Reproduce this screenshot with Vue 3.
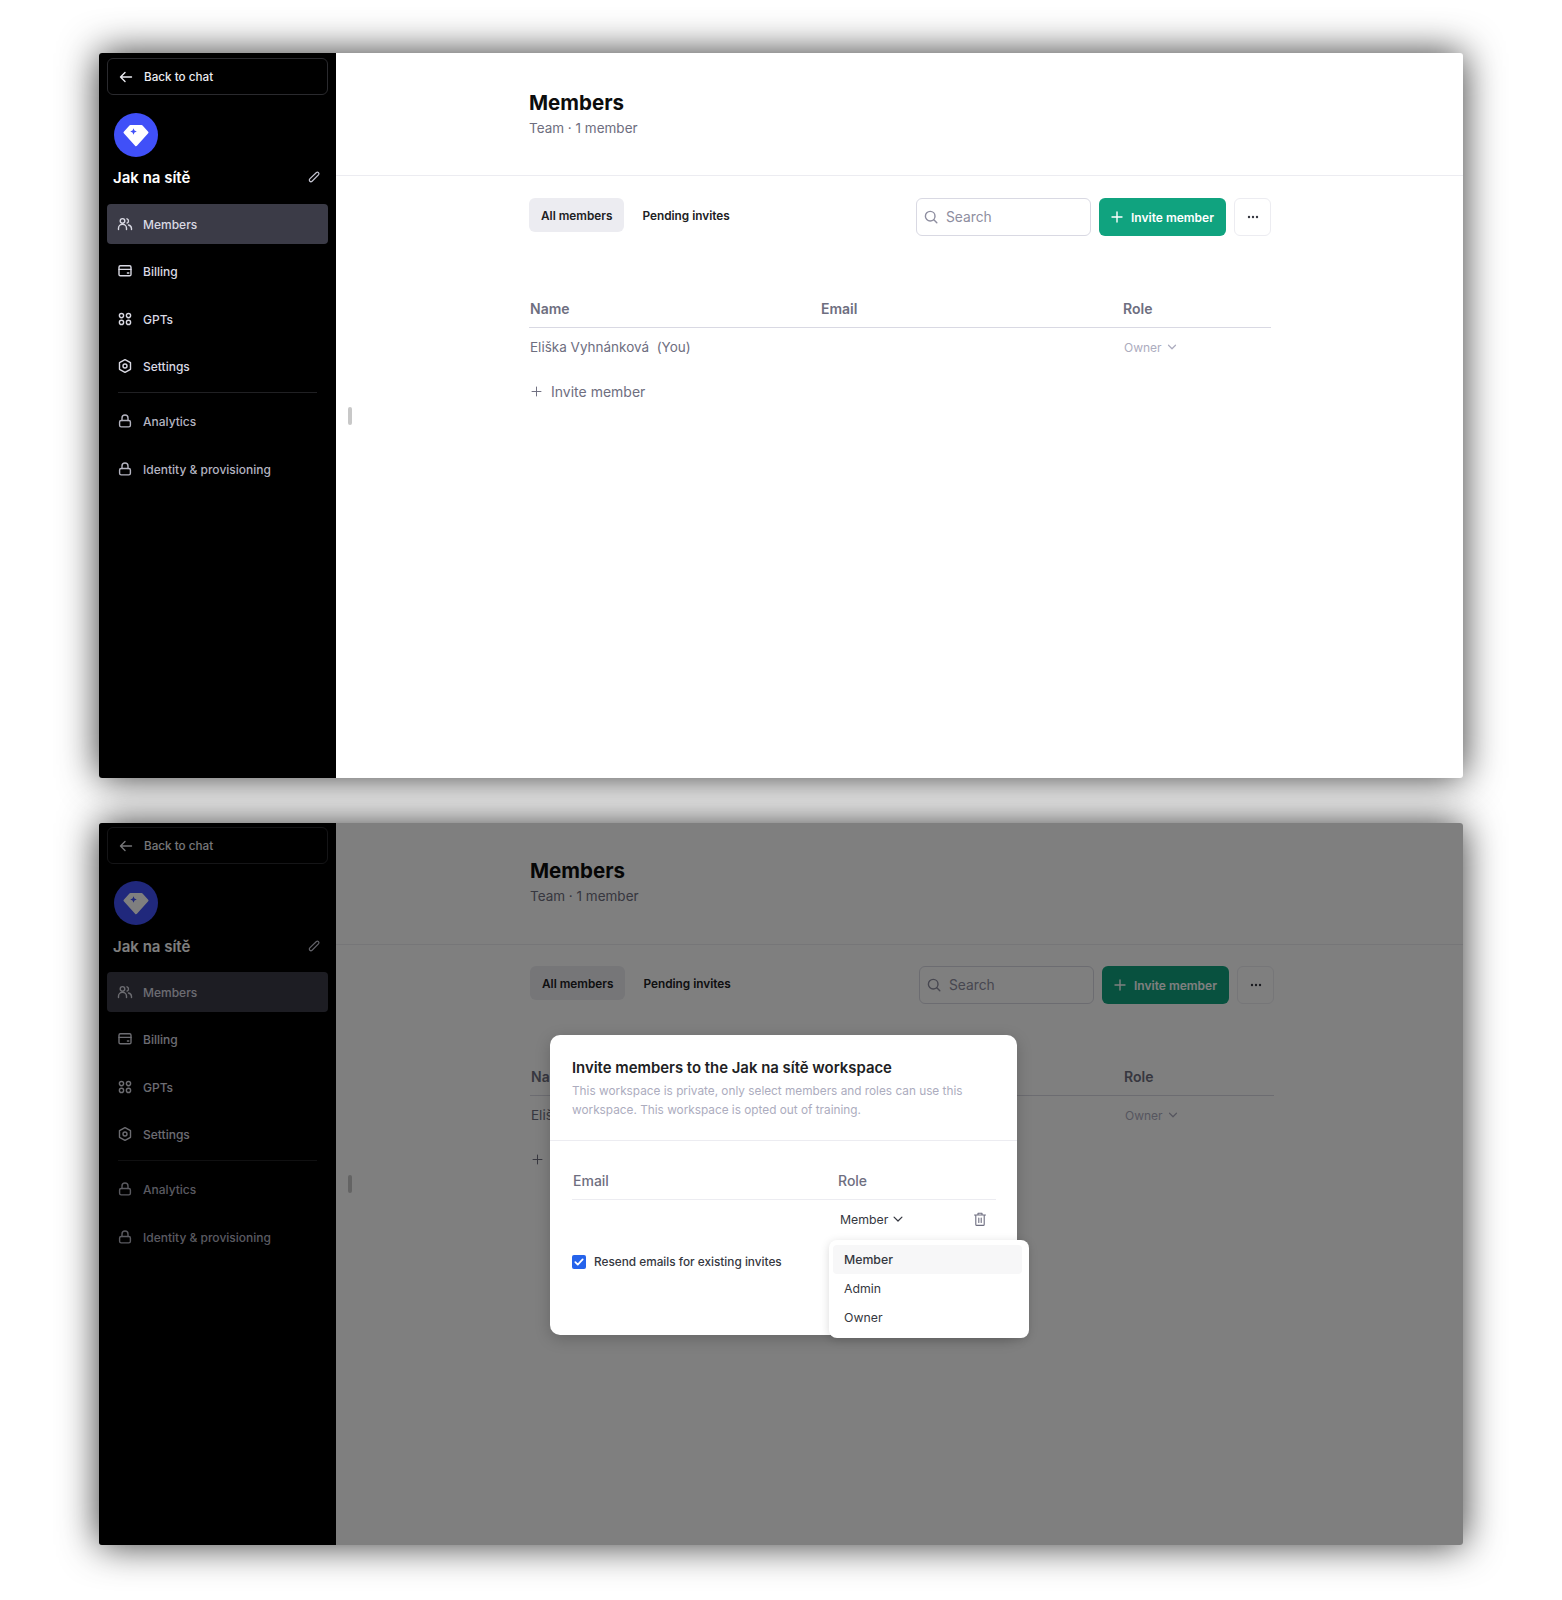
<template>
  <div class="page">
    <section v-for="win in windows" :key="win.id" :class="['window', { second: win.modal }]">
      <aside class="sidebar">
        <button class="back" type="button">
          <svg class="ico" viewBox="0 0 16 16"><path d="M13.5 8h-11M7 3.5 2.5 8 7 12.5" /></svg>
          <span>Back to chat</span>
        </button>
        <div class="avatar">
          <svg viewBox="0 0 24 24" width="30" height="30">
            <path class="gem" d="M7.5 5h9L21 10 12 20 3 10z" />
            <path class="spark" d="M10 6.6l.8 1.8 1.8.8-1.8.8-.8 1.8-.8-1.8-1.8-.8 1.8-.8z" />
          </svg>
        </div>
        <div class="team">
          <span>Jak na sítě</span>
          <svg class="ico pencil" viewBox="0 0 16 16">
            <path d="M10.8 2.8a1.8 1.8 0 0 1 2.5 2.5l-7.5 7.5a1.8 1.8 0 0 1-2.6-2.6z" />
          </svg>
        </div>
        <nav class="nav">
          <a v-for="item in navTop" :key="item.label" :class="['nav-row', { active: item.active }]">
            <svg class="ico" viewBox="0 0 16 16"><path v-for="d in item.paths" :key="d" :d="d" /></svg>
            <span>{{ item.label }}</span>
          </a>
          <div class="sep"></div>
          <a v-for="item in navLocked" :key="item" class="nav-row locked">
            <svg class="ico" viewBox="0 0 16 16">
              <path d="M5 7.5V5a3 3 0 0 1 6 0v2.5" />
              <rect x="2.6" y="7.5" width="10.8" height="6.4" rx="1.6" />
            </svg>
            <span>{{ item }}</span>
          </a>
        </nav>
      </aside>

      <main class="main">
        <span class="handle"></span>
        <header class="head">
          <h1>Members</h1>
          <p>Team · 1 member</p>
        </header>
        <div class="body">
          <div class="toolbar">
            <div class="tabs">
              <span class="tab on">All members</span>
              <span class="tab">Pending invites</span>
            </div>
            <div class="tools">
              <label class="search">
                <svg class="ico" viewBox="0 0 16 16"><circle cx="7.2" cy="7.2" r="4.8" /><path d="m10.8 10.8 3 3" /></svg>
                <span>Search</span>
              </label>
              <button class="invite" type="button">
                <svg class="ico" viewBox="0 0 16 16"><path d="M8 3v10M3 8h10" /></svg>
                Invite member
              </button>
              <button class="more" type="button">
                <svg viewBox="0 0 16 16" width="16" height="16"><circle cx="4" cy="8" r="1.2" /><circle cx="8" cy="8" r="1.2" /><circle cx="12" cy="8" r="1.2" /></svg>
              </button>
            </div>
          </div>
          <div class="table">
            <div class="thead"><span>Name</span><span>Email</span><span>Role</span></div>
            <div class="trow">
              <span>Eliška Vyhnánková&nbsp; (You)</span>
              <span></span>
              <span class="owner">
                Owner
                <svg class="ico" viewBox="0 0 16 16"><path d="m4 6 4 4 4-4" /></svg>
              </span>
            </div>
            <div class="add">
              <svg class="ico" viewBox="0 0 16 16"><path d="M8 2.5v11M2.5 8h11" /></svg>
              Invite member
            </div>
          </div>
        </div>
      </main>

      <template v-if="win.modal">
        <div class="overlay"></div>
        <div class="modal">
          <div class="modal-head">
            <h2>Invite members to the Jak na sítě workspace</h2>
            <p>This workspace is private, only select members and roles can use this workspace. This workspace is opted out of training.</p>
          </div>
          <div class="modal-body">
            <div class="m-head"><span>Email</span><span>Role</span></div>
            <div class="m-row">
              <span class="m-role">
                Member
                <svg class="ico" viewBox="0 0 16 16"><path d="m3.5 5.8 4.5 4.5 4.5-4.5" /></svg>
              </span>
              <svg class="ico trash" viewBox="0 0 16 16">
                <path d="M2.5 4h11M6 4V2.2h4V4M3.8 4v9.4a1 1 0 0 0 1 1h6.4a1 1 0 0 0 1-1V4M6.8 7v4.5M9.2 7v4.5" />
              </svg>
            </div>
            <div class="resend">
              <span class="check">
                <svg viewBox="0 0 16 16" width="14" height="14"><path d="m3.8 8.2 2.8 2.8 5.6-6" /></svg>
              </span>
              Resend emails for existing invites
            </div>
          </div>
        </div>
        <ul class="menu">
          <li v-for="(opt, i) in roles" :key="opt" :class="{ hover: i === 0 }">{{ opt }}</li>
        </ul>
      </template>
    </section>
  </div>
</template>

<script setup>
const windows = [
  { id: 1, modal: false },
  { id: 2, modal: true },
];

const navTop = [
  {
    label: "Members",
    active: true,
    paths: [
      "M1.5 13.5v-1.2a4 4 0 0 1 8 0v1.2",
      "M3.2 4.9a2.3 2.3 0 1 0 4.6 0 2.3 2.3 0 1 0-4.6 0",
      "M10 2.8a2.3 2.3 0 0 1 0 4.3",
      "M11.5 9a3.8 3.8 0 0 1 3 3.5v1",
    ],
  },
  {
    label: "Billing",
    paths: [
      "M3.4 2.8h9.2a1.4 1.4 0 0 1 1.4 1.4v7.2a1.4 1.4 0 0 1-1.4 1.4H3.4A1.4 1.4 0 0 1 2 11.4V4.2a1.4 1.4 0 0 1 1.4-1.4z",
      "M2 6.4h12",
      "M10.4 10h1.4",
    ],
  },
  {
    label: "GPTs",
    paths: [
      "M2.4 4.6a2.1 2.1 0 1 0 4.2 0 2.1 2.1 0 1 0-4.2 0",
      "M9.4 4.6a2.1 2.1 0 1 0 4.2 0 2.1 2.1 0 1 0-4.2 0",
      "M2.4 11.4a2.1 2.1 0 1 0 4.2 0 2.1 2.1 0 1 0-4.2 0",
      "M9.4 11.4a2.1 2.1 0 1 0 4.2 0 2.1 2.1 0 1 0-4.2 0",
    ],
  },
  {
    label: "Settings",
    paths: [
      "M8 1.6l5.5 3.1v6.6L8 14.4l-5.5-3.1V4.7z",
      "M6 8a2 2 0 1 0 4 0 2 2 0 1 0-4 0",
    ],
  },
];

const navLocked = ["Analytics", "Identity & provisioning"];
const roles = ["Member", "Admin", "Owner"];
</script>

<style>
html,
body {
  margin: 0;
  background: #fff;
}
</style>

<style scoped>
.page {
  height: 1600px;
  overflow: hidden;
  box-sizing: border-box;
  padding: 53px 99px 0;
  display: flex;
  flex-direction: column;
  gap: 45px;
  font-family: Inter, "Liberation Sans", sans-serif;
  color: #202123;
}

.window {
  position: relative;
  display: flex;
  height: 725px;
  background: #fff;
  border-radius: 3px;
  box-shadow: 0 0 38px rgba(0, 0, 0, 0.8);
}

.window.second {
  height: 722px;
}

.ico {
  width: 16px;
  height: 16px;
  flex: none;
  fill: none;
  stroke: currentColor;
  stroke-width: 1.4;
  stroke-linecap: round;
  stroke-linejoin: round;
}

.sidebar {
  width: 237px;
  flex: none;
  box-sizing: border-box;
  padding: 5px 8px;
  background: #000;
  border-radius: 3px 0 0 3px;
  color: #ececf1;
}

.second .sidebar {
  padding-top: 4px;
}

.back {
  display: flex;
  align-items: center;
  gap: 10px;
  width: 100%;
  height: 37px;
  box-sizing: border-box;
  padding: 0 10px;
  border: 1px solid #2a2a2e;
  border-radius: 6px;
  background: none;
  color: #ececf1;
  font: 500 11.7px Inter, sans-serif;
}

.avatar {
  width: 44px;
  height: 44px;
  margin: 18px 0 0 7px;
  border-radius: 50%;
  background: #4050f8;
  display: flex;
  align-items: center;
  justify-content: center;
}

.second .avatar {
  margin-top: 17px;
}

.gem {
  fill: #fff;
  stroke: #fff;
  stroke-width: 2;
  stroke-linejoin: round;
}

.spark {
  fill: #4050f8;
}

.team {
  display: flex;
  align-items: center;
  justify-content: space-between;
  height: 24px;
  margin: 8px 0 15px 6px;
  padding-right: 7px;
  font-size: 15px;
  font-weight: 600;
  color: #fff;
}

.second .team {
  margin: 9px 0 14px 6px;
}

.pencil {
  width: 14px;
  height: 14px;
  color: #c5c5d2;
}

.nav {
  display: flex;
  flex-direction: column;
  gap: 7.3px;
}

.nav-row {
  display: flex;
  align-items: center;
  gap: 10px;
  height: 40px;
  padding: 0 10px;
  border-radius: 4px;
  font-size: 12px;
  font-weight: 500;
  color: #d9d9e3;
}

.nav-row span {
  padding-top: 1px;
}

.nav-row.active {
  background: #3b3b47;
}

.sep {
  height: 1px;
  margin: -1px 11px 1px;
  background: #202023;
}

.nav-row.locked {
  color: #b4b4c0;
}

.main {
  position: relative;
  flex: 1;
  min-width: 0;
}

.handle {
  position: absolute;
  left: 12px;
  top: 354px;
  width: 4px;
  height: 18px;
  border-radius: 2px;
  background: #c8c8c8;
}

.second .handle {
  top: 352px;
}

.head {
  height: 123px;
  box-sizing: border-box;
  padding: 36px 0 0 193px;
  border-bottom: 1px solid #ececf1;
}

.second .head {
  height: 122px;
  padding: 34px 0 0 194px;
}

h1 {
  margin: 0;
  font-size: 20.5px;
  line-height: 28px;
  font-weight: 700;
  color: #0d0d0d;
}

.head p {
  margin: 1px 0 0;
  font-size: 13.5px;
  line-height: 20px;
  color: #6e6e80;
}

.body {
  width: 742px;
  margin-left: 193px;
  padding-top: 22px;
}

.second .body {
  width: 744px;
  margin-left: 194px;
  padding-top: 21px;
}

.toolbar {
  display: flex;
  justify-content: space-between;
  align-items: flex-start;
}

.tabs {
  display: flex;
  gap: 2px;
}

.tab {
  display: flex;
  align-items: center;
  height: 34px;
  padding: 1px 12px 0;
  box-sizing: border-box;
  border-radius: 6px;
  font-size: 11.8px;
  font-weight: 600;
}

.tab + .tab {
  padding-left: 16px;
}

.tab.on {
  background: #ececf1;
}

.tools {
  display: flex;
  gap: 8px;
}

.search {
  display: flex;
  align-items: center;
  gap: 7px;
  width: 175px;
  height: 38px;
  box-sizing: border-box;
  padding: 0 6px;
  border: 1px solid #d9d9e3;
  border-radius: 6px;
  background: #fff;
  font-size: 13.8px;
  color: #8e8ea0;
}

.invite {
  display: flex;
  align-items: center;
  gap: 6px;
  width: 127px;
  height: 38px;
  padding: 0 10px;
  border: 0;
  border-radius: 6px;
  background: #10a37f;
  color: #fff;
  font: 600 12px Inter, sans-serif;
  white-space: nowrap;
}

.more {
  display: flex;
  align-items: center;
  justify-content: center;
  width: 37px;
  height: 38px;
  padding: 0;
  border: 1px solid #ececf1;
  border-radius: 6px;
  background: #fff;
  fill: #353740;
}

.table {
  margin-top: 60px;
  font-size: 14px;
  color: #6e6e80;
}

.thead,
.trow {
  display: grid;
  grid-template-columns: 291px 302px 1fr;
  padding-left: 1px;
}

.thead {
  height: 31px;
  border-bottom: 1px solid #d9d9e3;
  font-weight: 600;
  line-height: 26px;
}

.trow {
  height: 38px;
  align-items: center;
  font-size: 13.5px;
}

.owner {
  display: flex;
  align-items: center;
  gap: 3px;
  margin-left: 1px;
  font-size: 12px;
  color: #acacbe;
}

.owner .ico {
  width: 14px;
  height: 14px;
}

.add {
  display: flex;
  align-items: center;
  gap: 8px;
  height: 30px;
  margin-top: 10px;
  padding-left: 1px;
  color: #6e6e80;
}

.add .ico {
  width: 13px;
  height: 13px;
  stroke-width: 1.2;
}

.overlay {
  position: absolute;
  inset: 0;
  border-radius: 3px;
  background: rgba(0, 0, 0, 0.5);
}

.modal {
  position: absolute;
  left: 451px;
  top: 212px;
  width: 467px;
  height: 300px;
  border-radius: 10px;
  background: #fff;
  box-shadow: 0 4px 16px rgba(0, 0, 0, 0.2);
}

.modal-head {
  height: 106px;
  box-sizing: border-box;
  padding: 21px 21px 0 22px;
  border-bottom: 1px solid #ececf1;
}

h2 {
  margin: 0;
  font-size: 14.9px;
  line-height: 24px;
  font-weight: 600;
  color: #202123;
}

.modal-head p {
  margin: 2px 0 0;
  font-size: 11.8px;
  line-height: 18.5px;
  color: #acacbe;
}

.modal-body {
  padding: 23px 21px 0 22px;
}

.m-head {
  display: grid;
  grid-template-columns: 265px 1fr;
  height: 36px;
  border-bottom: 1px solid #ececf1;
  font-size: 14px;
  font-weight: 500;
  line-height: 34px;
  color: #6e6e80;
  padding-left: 1px;
  box-sizing: border-box;
}

.m-row {
  display: flex;
  align-items: center;
  justify-content: space-between;
  height: 38px;
  padding: 0 8px 0 268px;
  font-size: 12.3px;
  color: #353740;
}

.m-role {
  display: flex;
  align-items: center;
  gap: 3px;
}

.m-role .ico {
  width: 14px;
  height: 14px;
}

.trash {
  color: #6e6e80;
  stroke-width: 1.1;
}

.resend {
  display: flex;
  align-items: center;
  gap: 8px;
  margin-top: 17px;
  font-size: 11.8px;
  font-weight: 500;
  color: #353740;
}

.check {
  display: flex;
  align-items: center;
  justify-content: center;
  width: 14px;
  height: 14px;
  border-radius: 2px;
  background: #2563eb;
  fill: none;
  stroke: #fff;
  stroke-width: 2;
  stroke-linecap: round;
  stroke-linejoin: round;
}

.menu {
  position: absolute;
  left: 730px;
  top: 417px;
  width: 200px;
  height: 98px;
  box-sizing: border-box;
  margin: 0;
  padding: 5px 7px 0 4px;
  list-style: none;
  border-radius: 8px;
  background: #fff;
  box-shadow: 0 2px 10px rgba(0, 0, 0, 0.15);
  font-size: 12.3px;
  color: #353740;
}

.menu li {
  display: flex;
  align-items: center;
  height: 29px;
  padding-left: 11px;
  border-radius: 4px;
}

.menu li.hover {
  background: #f7f7f8;
  font-weight: 500;
}
</style>
